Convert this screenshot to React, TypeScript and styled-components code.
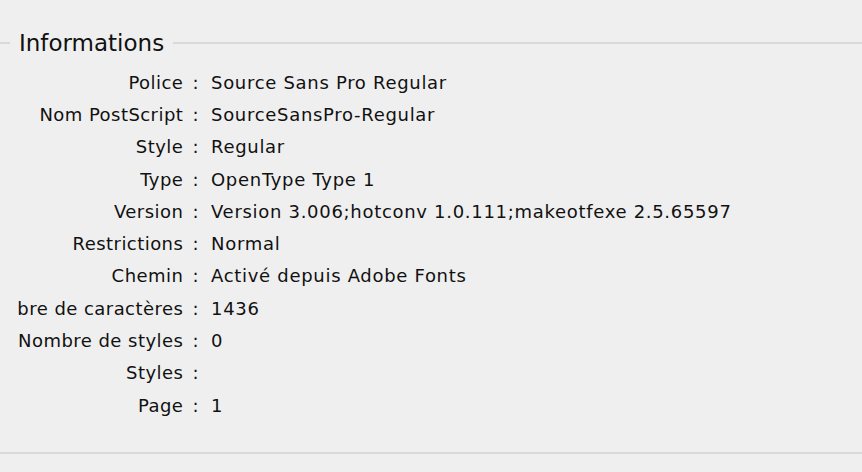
import React from "react";
import styled, { createGlobalStyle } from "styled-components";

const Global = createGlobalStyle`
  html, body { margin: 0; padding: 0; background: #efefef; }
  body { font-family: "DejaVu Sans", "Liberation Sans", sans-serif; color: #111; }
`;

const Page = styled.div`
  width: 862px;
  height: 472px;
  background: #efefef;
  overflow: hidden;
  display: flex;
  flex-direction: column;
`;

const Legend = styled.div`
  display: flex;
  align-items: center;
  height: 34px;
  margin-top: 26px;
`;

const Rule = styled.div<{ $w?: number }>`
  height: 2px;
  background: #d9d9d9;
  ${(p) => (p.$w ? `width: ${p.$w}px; flex: none;` : `flex: 1;`)}
`;

const Title = styled.div`
  font-size: 23px;
  padding: 0 9px;
  line-height: 34px;
  color: #111;
`;

const List = styled.div`
  display: grid;
  grid-template-columns: 182px auto;
  grid-auto-rows: 32.3px;
  padding-left: 17px;
  margin-top: 6px;
`;

const Label = styled.div`
  display: flex;
  justify-content: flex-end;
  align-items: center;
  overflow: hidden;
  white-space: nowrap;
  font-size: 18px;
  letter-spacing: 0.45px;
`;

const Colon = styled.span`
  margin-left: 3px;
`;

const Value = styled.div`
  display: flex;
  align-items: center;
  white-space: nowrap;
  font-size: 18px;
  letter-spacing: 0.7px;
  padding-left: 12px;
`;

const Spacer = styled.div`
  flex: 1;
`;

const Bottom = styled.div`
  height: 2px;
  background: #d9d9d9;
  margin-bottom: 18px;
`;

const rows: [string, string][] = [
  ["Police", "Source Sans Pro Regular"],
  ["Nom PostScript", "SourceSansPro-Regular"],
  ["Style", "Regular"],
  ["Type", "OpenType Type 1"],
  ["Version", "Version 3.006;hotconv 1.0.111;makeotfexe 2.5.65597"],
  ["Restrictions", "Normal"],
  ["Chemin", "Activé depuis Adobe Fonts"],
  ["Nombre de caractères", "1436"],
  ["Nombre de styles", "0"],
  ["Styles", ""],
  ["Page", "1"],
];

export default function App() {
  return (
    <Page>
      <Global />
      <Legend>
        <Rule $w={10} />
        <Title>Informations</Title>
        <Rule />
      </Legend>
      <List>
        {rows.map(([l, v]) => (
          <React.Fragment key={l}>
            <Label>
              {l}&nbsp;<Colon>:</Colon>
            </Label>
            <Value>{v}</Value>
          </React.Fragment>
        ))}
      </List>
      <Spacer />
      <Bottom />
    </Page>
  );
}
